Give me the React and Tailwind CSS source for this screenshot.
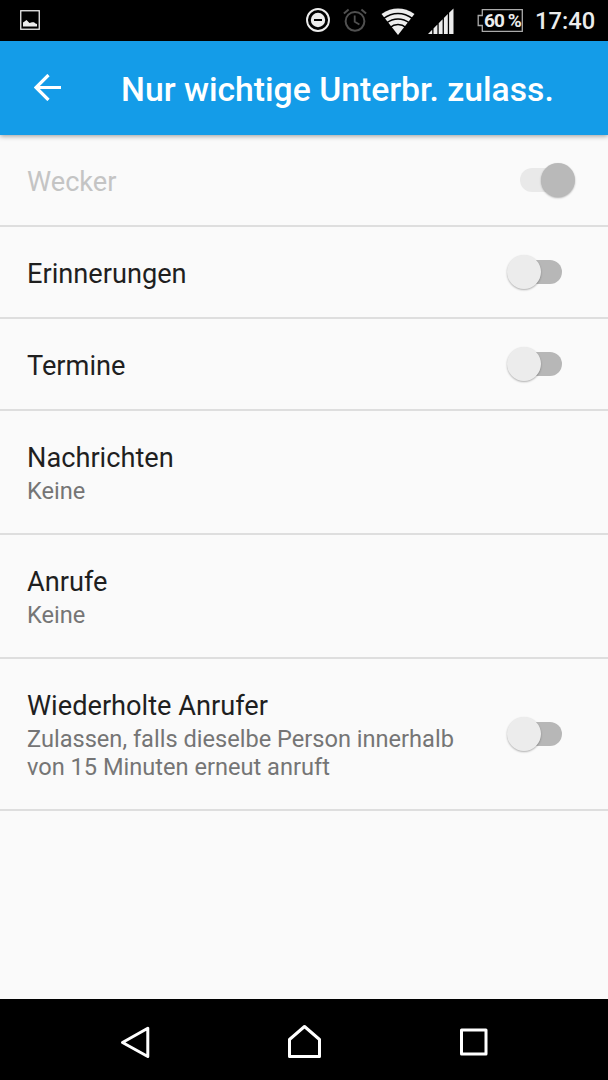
import React from 'react';

const settings = [
  { title: 'Wecker', toggle: 'on', disabled: true, height: 'h-[92px]' },
  { title: 'Erinnerungen', toggle: 'off', height: 'h-[92px]' },
  { title: 'Termine', toggle: 'off', height: 'h-[92px]' },
  { title: 'Nachrichten', summary: 'Keine', height: 'h-[124px]' },
  { title: 'Anrufe', summary: 'Keine', height: 'h-[124px]' },
  {
    title: 'Wiederholte Anrufer',
    summary: 'Zulassen, falls dieselbe Person innerhalb von 15 Minuten erneut anruft',
    toggle: 'off',
    height: 'h-[152px]',
  },
];

function StatusBar() {
  return (
    <div className="h-[41px] shrink-0 bg-black flex items-center pb-px pl-5 pr-[14px] text-[#ececec]">
      <svg className="w-5 h-5" viewBox="0 0 20 20">
        <rect x="0.75" y="0.75" width="18.5" height="18.5" fill="none" stroke="currentColor" strokeWidth="1.3" />
        <path d="M3 16.5V12.5L4.5 11.5L6.5 10L9.5 13L12 12.3L14 12.2L15.5 13.5L17 14V16.5Z" fill="currentColor" />
      </svg>

      <svg className="w-6 h-6 ml-auto" viewBox="0 0 24 24">
        <circle cx="12" cy="12" r="11" fill="none" stroke="currentColor" strokeWidth="1.9" />
        <circle cx="12" cy="12" r="7.2" fill="currentColor" />
        <path d="M8 12H16" stroke="#000" strokeWidth="2" />
      </svg>

      <svg className="w-6 h-6 ml-[13px] text-[#505050]" viewBox="0 0 24 24" fill="none" stroke="currentColor">
        <circle cx="12" cy="13.3" r="9.4" strokeWidth="2" />
        <path d="M0.9 5.6L5.6 1.6M23.1 5.6L18.4 1.6" strokeWidth="2" />
        <path d="M11.7 7.5V13.8L16.4 16.5" strokeWidth="1.8" />
      </svg>

      <svg className="w-[34px] h-[27px] mt-[2px] ml-[14px]" viewBox="0 0 34 27">
        <path d="M0.5 6Q17 -4.8 33.5 6L17 27Z" fill="currentColor" />
        <g fill="none" stroke="#000" strokeWidth="1.5">
          <path d="M2 10.8Q17 0.2 32 10.8" />
          <path d="M5 15.3Q17 6.7 29 15.3" />
          <path d="M8.5 19.8Q17 13.2 25.5 19.8" />
        </g>
      </svg>

      <svg className="w-[26px] h-[26px] mt-[2px] ml-[13px]" viewBox="0 0 26 26" fill="currentColor">
        <path d="M0 26L4.2 21.7V26ZM5.5 20.4L9.4 16.5V26H5.5ZM10.7 15.2L14.6 11.3V26H10.7ZM15.9 10L19.8 6.1V26H15.9ZM21.1 4.8L25.5 0.4V26H21.1Z" />
      </svg>

      <div className="relative ml-[23px] flex h-[23px] w-[46px] items-center">
        <svg className="absolute inset-0" width="46" height="23" viewBox="0 0 46 23">
          <path d="M5.3 0.7H45.3V22.3H5.3V16.5H1.2V6.5H5.3Z" fill="none" stroke="#aaa" strokeWidth="1.3" />
        </svg>
        <span className="relative w-full pl-[5px] text-center text-[19px] leading-none font-bold whitespace-nowrap tracking-[-0.9px]">
          60 %
        </span>
      </div>

      <span className="ml-3 w-[59px] pt-1 text-right text-[23.7px] leading-none font-medium whitespace-nowrap">17:40</span>
    </div>
  );
}

function Toggle({ state, disabled }) {
  const on = state === 'on';
  return (
    <div className={`relative h-6 w-[42px] shrink-0 rounded-full ${on ? 'bg-[#e9e9e9]' : 'bg-[#b7b7b7]'}`}>
      <div
        className={`absolute -top-[5px] h-[34px] w-[34px] rounded-full shadow-[0_1px_2px_rgba(0,0,0,0.3)] ${
          on ? 'left-[21px]' : '-left-[13px]'
        } ${disabled ? 'bg-[#b9b9b9]' : 'bg-[#ececec]'}`}
      />
    </div>
  );
}

function SettingRow({ title, summary, toggle, disabled, height }) {
  return (
    <div className={`${height} flex items-center justify-between border-b-2 border-[#dedede] pl-[27px] pr-[46px]`}>
      <div className="w-[440px] pt-1">
        <div className={`text-[27.2px] leading-8 ${disabled ? 'text-[#c4c4c4]' : 'text-[#1f1f1f]'}`}>{title}</div>
        {summary && <div className="pt-[3px] pb-px text-[23.6px] leading-7 text-[#757575]">{summary}</div>}
      </div>
      {toggle && <Toggle state={toggle} disabled={disabled} />}
    </div>
  );
}

function NavBar() {
  return (
    <div className="h-[81px] shrink-0 bg-black flex items-center justify-center pr-[2px] text-white">
      <svg className="w-[169px] h-[81px]" viewBox="50 0 169 81" fill="none" stroke="currentColor" strokeWidth="3" strokeLinejoin="round">
        <path d="M122.5 43.5L147.8 29.3V57.5Z" />
      </svg>
      <svg className="w-[169px] h-[81px]" viewBox="219 0 169 81" fill="none" stroke="currentColor" strokeWidth="3" strokeLinejoin="round">
        <path d="M289.5 57.5V40.5L304.5 27.5L319.5 40.5V57.5Z" />
      </svg>
      <svg className="w-[169px] h-[81px]" viewBox="388 0 169 81" fill="none" stroke="currentColor" strokeWidth="3" strokeLinejoin="round">
        <path d="M461.5 31H486V55H461.5Z" />
      </svg>
    </div>
  );
}

export default function App() {
  return (
    <div className="w-[608px] h-[1080px] flex flex-col overflow-hidden bg-[#fafafa] font-['Roboto','Liberation_Sans',sans-serif]">
      <StatusBar />
      <header className="relative h-[94px] shrink-0 flex items-center bg-[#149ce8] pb-px pl-[34px] text-white shadow-[0_1px_5px_rgba(0,0,0,0.4)]">
        <svg className="w-[27px] h-[27px]" viewBox="0 0 27 27" fill="none" stroke="currentColor" strokeWidth="3.2">
          <path d="M27 13.5H2M14.5 1L2 13.5L14.5 26" />
        </svg>
        <h1 className="ml-[60px] pt-[5px] text-[33.7px] leading-10 font-medium whitespace-nowrap">
          Nur wichtige Unterbr. zulass.
        </h1>
      </header>
      <main className="flex-1">
        {settings.map(item => (
          <SettingRow key={item.title} {...item} />
        ))}
      </main>
      <NavBar />
    </div>
  );
}
